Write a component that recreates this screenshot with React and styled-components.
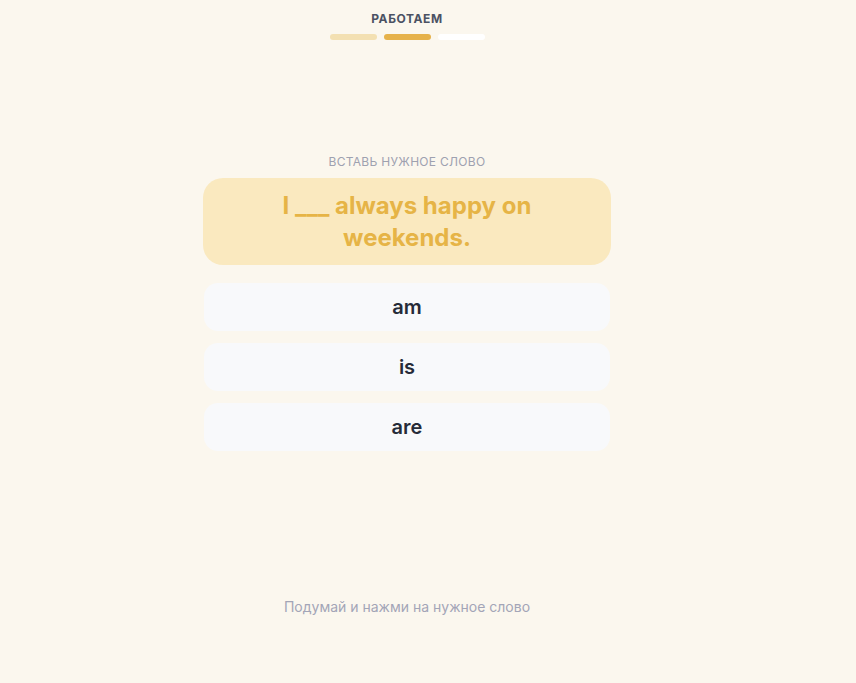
import React from 'react'
import styled, { createGlobalStyle } from 'styled-components'

const GlobalStyle = createGlobalStyle`
    html, body {
        margin: 0;
        padding: 0;
        background: #fbf7ee;
        font-family: Inter, "Noto Sans", sans-serif;
    }
`

const Page = styled.div`
    height: 100vh;
    display: flex;
    flex-direction: column;
    align-items: center;
    box-sizing: border-box;
    padding: 12px 42px 67px 0;
`

const Header = styled.div`
    display: flex;
    flex-direction: column;
    align-items: center;
    gap: 8px;
`

const Stage = styled.div`
    font-size: 12px;
    font-weight: 700;
    letter-spacing: 0.6px;
    color: #4b5263;
    line-height: 14px;
`

const Bars = styled.div`
    display: flex;
    gap: 7px;
`

const Bar = styled.div`
    width: 47px;
    height: 6px;
    border-radius: 3px;
    background: ${p => p.$color};
`

const Main = styled.div`
    margin-top: 115px;
    width: 408px;
    display: flex;
    flex-direction: column;
    align-items: center;
`

const Label = styled.div`
    font-size: 12px;
    letter-spacing: 0.3px;
    color: #9ea1b0;
    line-height: 14px;
    margin-bottom: 9px;
`

const Question = styled.div`
    width: 100%;
    box-sizing: border-box;
    height: 87px;
    border-radius: 20px;
    background: #fae9bf;
    color: #e6b446;
    font-size: 24px;
    font-weight: 700;
    line-height: 32px;
    text-align: center;
    display: flex;
    align-items: center;
    justify-content: center;
    padding: 0 60px;
    margin-bottom: 18px;
`

const Options = styled.div`
    width: 406px;
    display: flex;
    flex-direction: column;
    gap: 12px;
`

const Option = styled.button`
    height: 48px;
    border: none;
    border-radius: 14px;
    background: #f8f9fb;
    font-family: inherit;
    font-size: 20px;
    font-weight: 600;
    color: #262b38;
    cursor: pointer;
`

const Hint = styled.div`
    margin-top: auto;
    font-size: 14px;
    color: #a3a5b7;
    line-height: 18px;
`

const words = ['am', 'is', 'are']

const App = () => {
  return (
    <Page>
        <GlobalStyle />
        <Header>
            <Stage>РАБОТАЕМ</Stage>
            <Bars>
                <Bar $color="#f3e0b2" />
                <Bar $color="#e6b24b" />
                <Bar $color="#ffffff" />
            </Bars>
        </Header>
        <Main>
            <Label>ВСТАВЬ НУЖНОЕ СЛОВО</Label>
            <Question>I ___ always happy on weekends.</Question>
            <Options>
                {words.map(w => <Option key={w}>{w}</Option>)}
            </Options>
        </Main>
        <Hint>Подумай и нажми на нужное слово</Hint>
    </Page>
  )
}

export default App
